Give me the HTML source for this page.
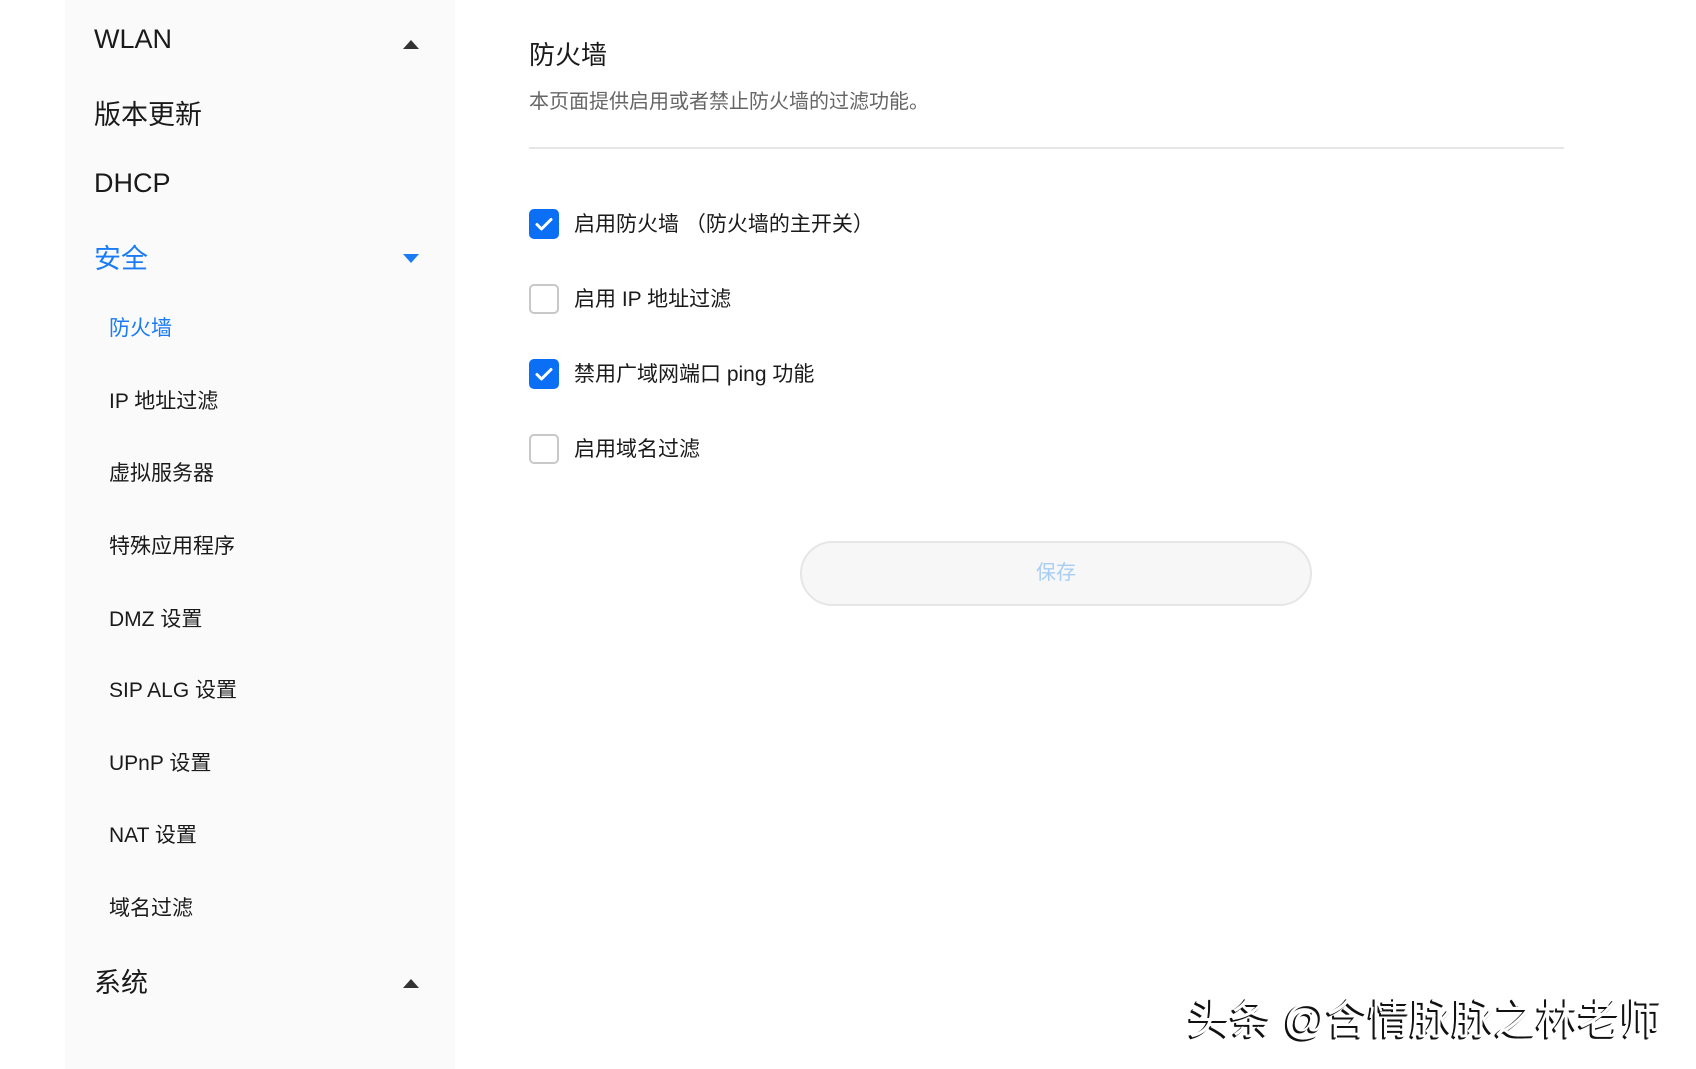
<!DOCTYPE html>
<html><head><meta charset="utf-8"><style>
body{margin:0;width:1696px;height:1069px;background:#fff;position:relative;overflow:hidden;font-family:"Liberation Sans","Noto Sans CJK SC",sans-serif;color:#1a1a1a}
.side{position:absolute;left:65px;top:0;width:390px;height:1069px;background:#fafafa}
.t{position:absolute;white-space:nowrap;line-height:1}
.l1{font-size:27px;left:94px}
.l2{font-size:21px;left:109px}
.arr{position:absolute;left:403px;width:0;height:0;border-left:8px solid transparent;border-right:8px solid transparent}
.up{border-bottom:9px solid #333}
.down{border-top:9px solid #1a7cf5}
.cb{position:absolute;left:529px;width:26px;height:26px;border:2px solid #c8c8c8;border-radius:5px;background:#fff}
.cb.on{background:#0a6ff5;border-color:#0a6ff5}
.lab{font-size:21px;left:574px}
</style></head><body>
<div class="side"></div>
<div class="t l1" style="top:26px">WLAN</div><div class="arr up" style="top:40px"></div>
<div class="t l1" style="top:102px">版本更新</div>
<div class="t l1" style="top:170px">DHCP</div>
<div class="t l1" style="top:246px;color:#1a7cf5">安全</div><div class="arr down" style="top:254px"></div>
<div class="t l2" style="top:318px;color:#1a7cf5">防火墙</div>
<div class="t l2" style="top:391px">IP 地址过滤</div>
<div class="t l2" style="top:463px">虚拟服务器</div>
<div class="t l2" style="top:536px">特殊应用程序</div>
<div class="t l2" style="top:609px">DMZ 设置</div>
<div class="t l2" style="top:680px">SIP ALG 设置</div>
<div class="t l2" style="top:753px">UPnP 设置</div>
<div class="t l2" style="top:825px">NAT 设置</div>
<div class="t l2" style="top:898px">域名过滤</div>
<div class="t l1" style="top:970px">系统</div><div class="arr up" style="top:979px"></div>

<div class="t" style="left:529px;top:42px;font-size:26px">防火墙</div>
<div class="t" style="left:529px;top:92px;font-size:20px;color:#666">本页面提供启用或者禁止防火墙的过滤功能。</div>
<div style="position:absolute;left:529px;top:147px;width:1035px;height:2px;background:#e6e6e6"></div>

<div class="cb on" style="top:209px"><svg width="26" height="26" viewBox="0 0 26 26"><path d="M6 13.5l4.5 4.5L20 8.5" fill="none" stroke="#fff" stroke-width="3" stroke-linecap="round" stroke-linejoin="round"/></svg></div>
<div class="t lab" style="top:214px">启用防火墙 （防火墙的主开关）</div>
<div class="cb" style="top:284px"></div>
<div class="t lab" style="top:289px">启用 IP 地址过滤</div>
<div class="cb on" style="top:359px"><svg width="26" height="26" viewBox="0 0 26 26"><path d="M6 13.5l4.5 4.5L20 8.5" fill="none" stroke="#fff" stroke-width="3" stroke-linecap="round" stroke-linejoin="round"/></svg></div>
<div class="t lab" style="top:364px">禁用广域网端口 ping 功能</div>
<div class="cb" style="top:434px"></div>
<div class="t lab" style="top:439px">启用域名过滤</div>

<div style="position:absolute;left:800px;top:541px;width:512px;height:65px;border:2px solid #e6e6e6;border-radius:33px;background:#f7f7f7;box-sizing:border-box;text-align:center;line-height:61px;font-size:20px;color:#a8cdf5">保存</div>

<div class="t" style="left:1188px;top:999px;font-size:42px;color:#fff;text-shadow:-2px 2px 0 #111,-1px 1px 0 #111,-2px 1px 0 #111">头条 @含情脉脉之林老师</div>
</body></html>
